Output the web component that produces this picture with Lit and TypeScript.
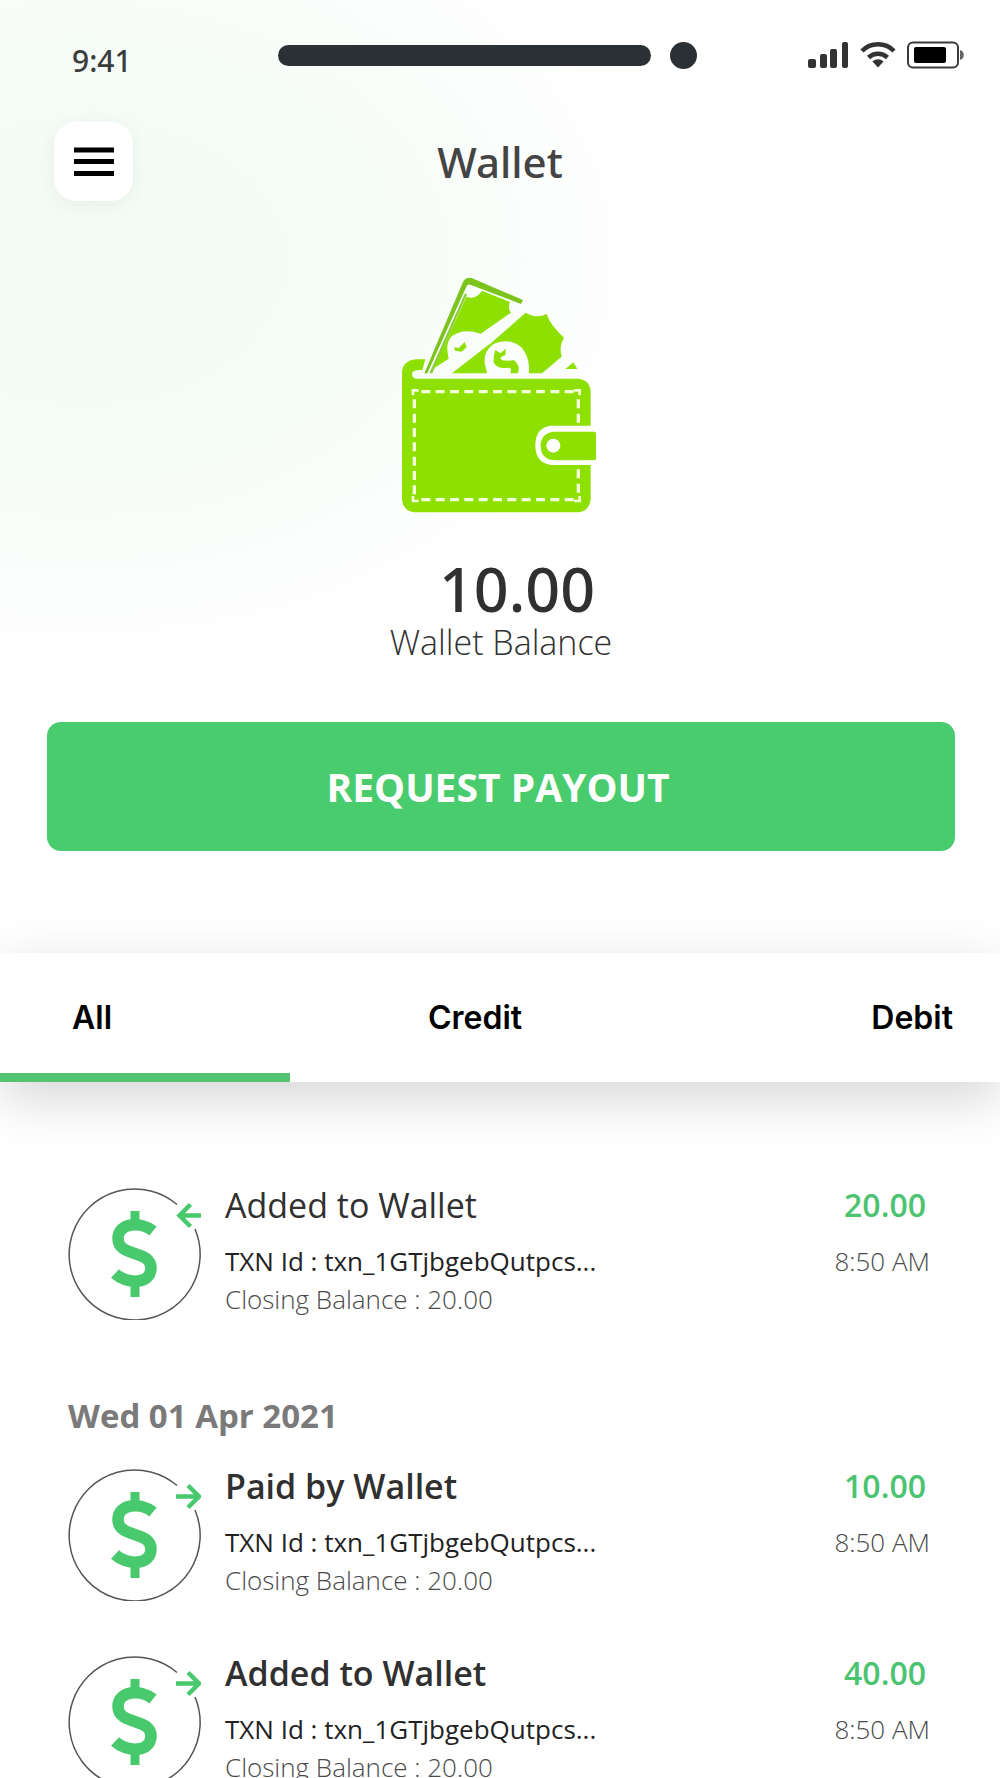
import { LitElement, html, svg, css } from "lit";
import { customElement, property, state } from "lit/decorators.js";
import { classMap } from "lit/directives/class-map.js";

type Direction = "in" | "out";

interface Transaction {
  title: string;
  strong: boolean;
  direction: Direction;
  txn: string;
  closing: string;
  amount: string;
  time: string;
}

const LATEST: Transaction[] = [
  { title: "Added to Wallet", strong: false, direction: "in", txn: "txn_1GTjbgebQutpcs...", closing: "20.00", amount: "20.00", time: "8:50 AM" },
];

const EARLIER: Transaction[] = [
  { title: "Paid by Wallet", strong: true, direction: "out", txn: "txn_1GTjbgebQutpcs...", closing: "20.00", amount: "10.00", time: "8:50 AM" },
  { title: "Added to Wallet", strong: true, direction: "out", txn: "txn_1GTjbgebQutpcs...", closing: "20.00", amount: "40.00", time: "8:50 AM" },
];

const TABS = ["All", "Credit", "Debit"];

@customElement("status-bar")
export class StatusBar extends LitElement {
  static styles = css`
    :host {
      display: grid;
      grid-template-columns: 10fr auto 13fr;
      align-items: center;
      height: 110px;
      padding: 0 36px 0 72px;
      font: 500 30px/40px "Noto Sans", "Open Sans", sans-serif;
      color: #3a3d3b;
    }
    .time { padding-top: 12px; }
    .island { display: flex; align-items: center; gap: 19px; }
    .bar { width: 373px; height: 21px; border-radius: 11px; background: #2b3034; }
    .lens { width: 27px; height: 27px; border-radius: 50%; background: #2b3034; }
    .icons { display: flex; justify-content: flex-end; align-items: center; gap: 11px; }
    svg { display: block; }
  `;

  render() {
    return html`
      <span class="time">9:41</span>
      <div class="island"><span class="bar"></span><span class="lens"></span></div>
      <div class="icons">
        <svg width="41" height="28" viewBox="0 0 41 28" fill="#333" aria-hidden="true">
          <rect x="0" y="18" width="8" height="9" rx="2" />
          <rect x="12" y="13" width="7" height="14" rx="2" />
          <rect x="22" y="8" width="7" height="19" rx="2" />
          <rect x="34" y="1" width="6" height="26" rx="2" />
        </svg>
        <svg width="36" height="28" viewBox="0 0 36 28" fill="none" stroke="#333" stroke-width="4.5" aria-hidden="true">
          <path d="M2 10C10.500 1 25.500 1 34 10" />
          <path d="M8.500 16.500C14 11.500 22 11.500 27.500 16.500" />
          <path d="M12.500 20.500C16 17.500 20 17.500 23.500 20.500L18 26.500Z" fill="#333" stroke="none" />
        </svg>
        <svg width="57" height="28" viewBox="0 0 57 28" aria-hidden="true">
          <rect x="1" y="1.500" width="50" height="25" rx="5" fill="#fff" stroke="#3a3a3a" stroke-width="2" />
          <rect x="7" y="6" width="32" height="16" rx="2" fill="#000" />
          <path d="M53 9C58 10 58 18 53 19Z" fill="#666" />
        </svg>
      </div>
    `;
  }
}

@customElement("transaction-row")
export class TransactionRow extends LitElement {
  @property({ attribute: false }) item!: Transaction;

  static styles = css`
    :host {
      display: grid;
      grid-template-columns: 133px 1fr auto;
      column-gap: 24px;
      height: 133px;
      color: #303030;
    }
    .coin { display: block; }
    .title { margin: 0; font-size: 34px; line-height: 36px; font-weight: 400; }
    .title.strong { font-weight: 600; }
    .line { margin: 0; font-size: 26px; line-height: 38px; font-weight: 400; white-space: nowrap; }
    .txn { margin-top: 19px; color: #222; }
    .light { font-weight: 300; color: #4a4a4a; }
    .side { text-align: right; padding-right: 2px; }
    .amount { margin: 0; padding-right: 4px; font-size: 32px; line-height: 36px; font-weight: 600; color: #4bc370; }
    .when { margin-top: 19px; }
  `;

  render() {
    const t = this.item;
    const arrow = t.direction === "in"
      ? svg`<path d="M133 28.500H112M122.500 17.500L111.500 28.500L122.500 39.500" />`
      : svg`<path d="M108 28.500H131M120 17.500L131 28.500L120 39.500" />`;
    return html`
      <svg class="coin" width="133" height="133" viewBox="0 0 133 133" fill="none" aria-hidden="true">
        <path d="M109 17.500A65.500 65.500 0 1 0 127 42" stroke="#555" stroke-width="1.500" />
        <g stroke="#49c96d" stroke-width="4.500">${arrow}</g>
        <g stroke="#49c96d" stroke-width="11.500">
          <path d="M67 24V38M67 94V110" stroke-width="9" />
          <path d="M85 44C73 34 50 35.500 50 51.500C50 70.500 83 62.500 83 81C83 98 58 97 47 86.500" />
        </g>
      </svg>
      <div>
        <h3 class=${classMap({ title: true, strong: t.strong })}>${t.title}</h3>
        <p class="line txn">TXN Id : ${t.txn}</p>
        <p class="line light">Closing Balance : ${t.closing}</p>
      </div>
      <div class="side">
        <p class="amount">${t.amount}</p>
        <p class="line light when">${t.time}</p>
      </div>
    `;
  }
}

@customElement("app-root")
export class AppRoot extends LitElement {
  @state() private active = 0;

  static styles = css`
    :host {
      display: flex;
      flex-direction: column;
      height: 100vh;
      overflow: hidden;
      font-family: "Open Sans", "Noto Sans", sans-serif;
      color: #303030;
      background: radial-gradient(ellipse 600px 420px at 80px 260px, #f3fbf4 0%, #f6fcf7 50%, #fff 100%), #fff;
    }
    .header {
      display: grid;
      grid-template-columns: 79px 1fr 79px;
      align-items: center;
      padding: 12px 54px 0;
    }
    .menu {
      display: grid;
      place-items: center;
      width: 79px;
      height: 79px;
      padding: 0;
      border: 0;
      border-radius: 22px;
      background: #fff;
      box-shadow: 0 4px 20px rgba(0, 60, 20, 0.06);
    }
    h1 { margin: 0; text-align: center; font: 500 42px/56px "Noto Sans", "Open Sans", sans-serif; color: #444; }
    .summary { display: flex; flex-direction: column; align-items: center; padding-top: 74px; }
    .balance { margin: 39px 0 0; padding-left: 34px; font: 500 61px/70px "Noto Sans", "Open Sans", sans-serif; }
    .caption { margin: 0; padding-left: 2px; font-size: 34px; line-height: 36px; font-weight: 300; }
    .payout {
      height: 129px;
      margin: 62px 45px 0 47px;
      padding: 0 6px 0 0;
      border: 0;
      border-radius: 14px;
      background: #49cc6d;
      color: #fff;
      font: 700 39px/48px "Open Sans", "Noto Sans", sans-serif;
    }
    .tabs {
      display: grid;
      grid-template-columns: 29% 37% 34%;
      height: 129px;
      flex: none;
      margin-top: 102px;
      background: #fff;
      box-shadow: 0 16px 54px rgba(0, 0, 0, 0.17);
    }
    .tab {
      padding: 0;
      border: solid transparent;
      border-width: 9px 0;
      background: none;
      font: 600 32px/40px Inter, Roboto, sans-serif;
      color: #000;
    }
    .tab:first-child { padding-left: 72px; text-align: left; }
    .tab:last-child { padding-right: 47px; text-align: right; }
    .tab.active { border-bottom-color: #54c372; }
    .list {
      display: flex;
      flex-direction: column;
      gap: 54px;
      flex: 1;
      min-height: 0;
      padding: 105px 68px 0;
      overflow: hidden;
    }
    transaction-row { flex: none; }
    .day { display: flex; flex-direction: column; padding-top: 18px; }
    .date { margin: 0 0 28px; font-size: 33px; line-height: 48px; font-weight: 700; color: #7a7a7a; }
    .rows { display: flex; flex-direction: column; gap: 54px; }
  `;

  private wallet() {
    return html`
      <svg width="200" height="240" viewBox="60 45 600 720" fill="#8ee000" role="img" aria-label="Wallet with money">
        <path d="M66 338Q68 300 112 298H136L127 330Q95 328 96 343Q97 355 108 356H595Q632 360 632 398V497H512Q466 503 466 556Q466 608 512 615H632V718Q628 753 595 757H104Q69 753 66 718Z" />
        <path d="M642 515Q648 515 648 521V595Q648 601 642 601H522Q482 596 482 557Q482 520 522 515Z" />
        <circle cx="520" cy="557" r="21" fill="#fff" />
        <g fill="none" stroke="#f2ffd8" stroke-width="10" stroke-dasharray="27 16">
          <path d="M124 395H582M124 719H582" />
          <path d="M103 418V705M595 418V490M595 628V705" />
        </g>
        <path d="M99 406V391H116M582 391H599V406M99 708V723H116M582 723H599V708" fill="none" stroke="#f2ffd8" stroke-width="8" />
        <path d="M133 340L248 68Q256 50 275 54L429 120L423 132L273 75Q263 71 259 80L142 340Z" fill="#7cc41c" />
        <path d="M148 340L255 100L261 103L157 340Z" fill="#8ccc3c" />
        <path d="M162 325L259 110Q285 122 306 92L390 126Q382 145 393 158L302 221Q250 204 216 228Q194 248 206 296Z" />
        <path d="M222 262L236 264L254 246L260 262L244 275L225 272Z" />
        <path d="M216 340L326 254Q344 244 350 246Q310 268 314 310L321 340Z" />
        <path d="M330 252L437 158Q470 178 500 162Q510 195 552 233Q536 259 545 290L486 340H446Q452 296 426 264Q390 232 346 250Z" />
        <path d="M346 270L362 280L377 266V284Q355 292 365 300Q386 305 401 300Q423 318 413 340H390Q399 323 384 323Q354 329 341 308Q340 287 346 270Z" />
        <path d="M556 327L580 307L592 327Z" />
      </svg>
    `;
  }

  render() {
    return html`
      <status-bar></status-bar>
      <header class="header">
        <button class="menu" aria-label="Menu">
          <svg width="40" height="30" viewBox="0 0 40 30" aria-hidden="true">
            <path d="M0 3H40M0 14.500H40M0 26.500H40" stroke="#000" stroke-width="5" />
          </svg>
        </button>
        <h1>Wallet</h1>
      </header>
      <section class="summary">
        ${this.wallet()}
        <p class="balance">10.00</p>
        <p class="caption">Wallet Balance</p>
      </section>
      <button class="payout">REQUEST PAYOUT</button>
      <nav class="tabs">
        ${TABS.map((label, i) => html`
          <button
            class=${classMap({ tab: true, active: i === this.active })}
            aria-pressed=${i === this.active ? "true" : "false"}
            @click=${() => { this.active = i; }}
          >${label}</button>
        `)}
      </nav>
      <main class="list">
        ${LATEST.map((t) => html`<transaction-row .item=${t}></transaction-row>`)}
        <section class="day">
          <h2 class="date">Wed 01 Apr 2021</h2>
          <div class="rows">
            ${EARLIER.map((t) => html`<transaction-row .item=${t}></transaction-row>`)}
          </div>
        </section>
      </main>
    `;
  }
}
